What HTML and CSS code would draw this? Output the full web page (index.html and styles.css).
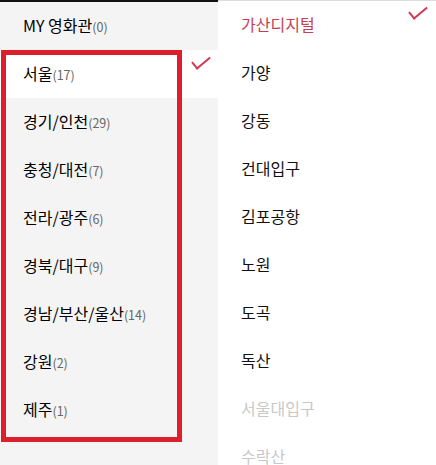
FILE: index.html
```html
<!DOCTYPE HTML>
<html>

<head>
    <meta charset="utf-8">
    <link rel="stylesheet" href="styles.css">
</head>

<body>
    <div id="picker">
        <ul class="regions">
            <li><span class="name">MY 영화관</span><span class="count">(0)</span></li>
            <li class="on"><span class="name">서울</span><span class="count">(17)</span><span class="check"></span></li>
            <li><span class="name">경기/인천</span><span class="count">(29)</span></li>
            <li><span class="name">충청/대전</span><span class="count">(7)</span></li>
            <li><span class="name">전라/광주</span><span class="count">(6)</span></li>
            <li><span class="name">경북/대구</span><span class="count">(9)</span></li>
            <li><span class="name">경남/부산/울산</span><span class="count">(14)</span></li>
            <li><span class="name">강원</span><span class="count">(2)</span></li>
            <li><span class="name">제주</span><span class="count">(1)</span></li>
        </ul>
        <ul class="theaters">
            <li class="on">가산디지털<span class="check"></span></li>
            <li>가양</li>
            <li>강동</li>
            <li>건대입구</li>
            <li>김포공항</li>
            <li>노원</li>
            <li>도곡</li>
            <li>독산</li>
            <li class="off">서울대입구</li>
            <li class="off">수락산</li>
        </ul>
        <div class="mark"></div>
    </div>
</body>

</html>
```

FILE: styles.css
```css
html, body {
    margin: 0;
    padding: 0;
    background: #fff;
}
body {
    font-family: "Noto Sans CJK KR", "Noto Sans", sans-serif;
    color: #111;
}
ul {
    list-style: none;
    margin: 0;
    padding: 0;
}
#picker {
    position: relative;
    display: flex;
    width: 436px;
    height: 465px;
    overflow: hidden;
}
.regions {
    width: 218px;
    flex: none;
    background: #f4f4f4;
    border-top: 2px solid #111;
}
.regions li {
    position: relative;
    height: 48px;
    line-height: 47px;
    padding-left: 23px;
    font-size: 16px;
    color: #000;
}
.regions li.on {
    background: #fff;
}
.regions .count {
    font-size: 12.5px;
    color: #666;
}
.theaters {
    flex: 1;
    border-top: 1px solid #ddd;
}
.theaters li {
    position: relative;
    height: 48px;
    line-height: 46px;
    padding-left: 23px;
    font-size: 16px;
    color: #111;
}
.theaters li.on {
    color: #c8404f;
}
.theaters li.off {
    color: #c8c8c8;
}
.check {
    position: absolute;
    width: 16px;
    height: 7px;
    border-left: 2.5px solid #d2384f;
    border-bottom: 2.5px solid #d2384f;
    transform: rotate(-40deg);
}
.regions .check {
    top: 6px;
    right: 8px;
}
.theaters .check {
    top: 5px;
    right: 9px;
}
.mark {
    position: absolute;
    left: 1px;
    top: 50px;
    width: 171px;
    height: 382px;
    border: 5px solid #dd1f2b;
}
```
